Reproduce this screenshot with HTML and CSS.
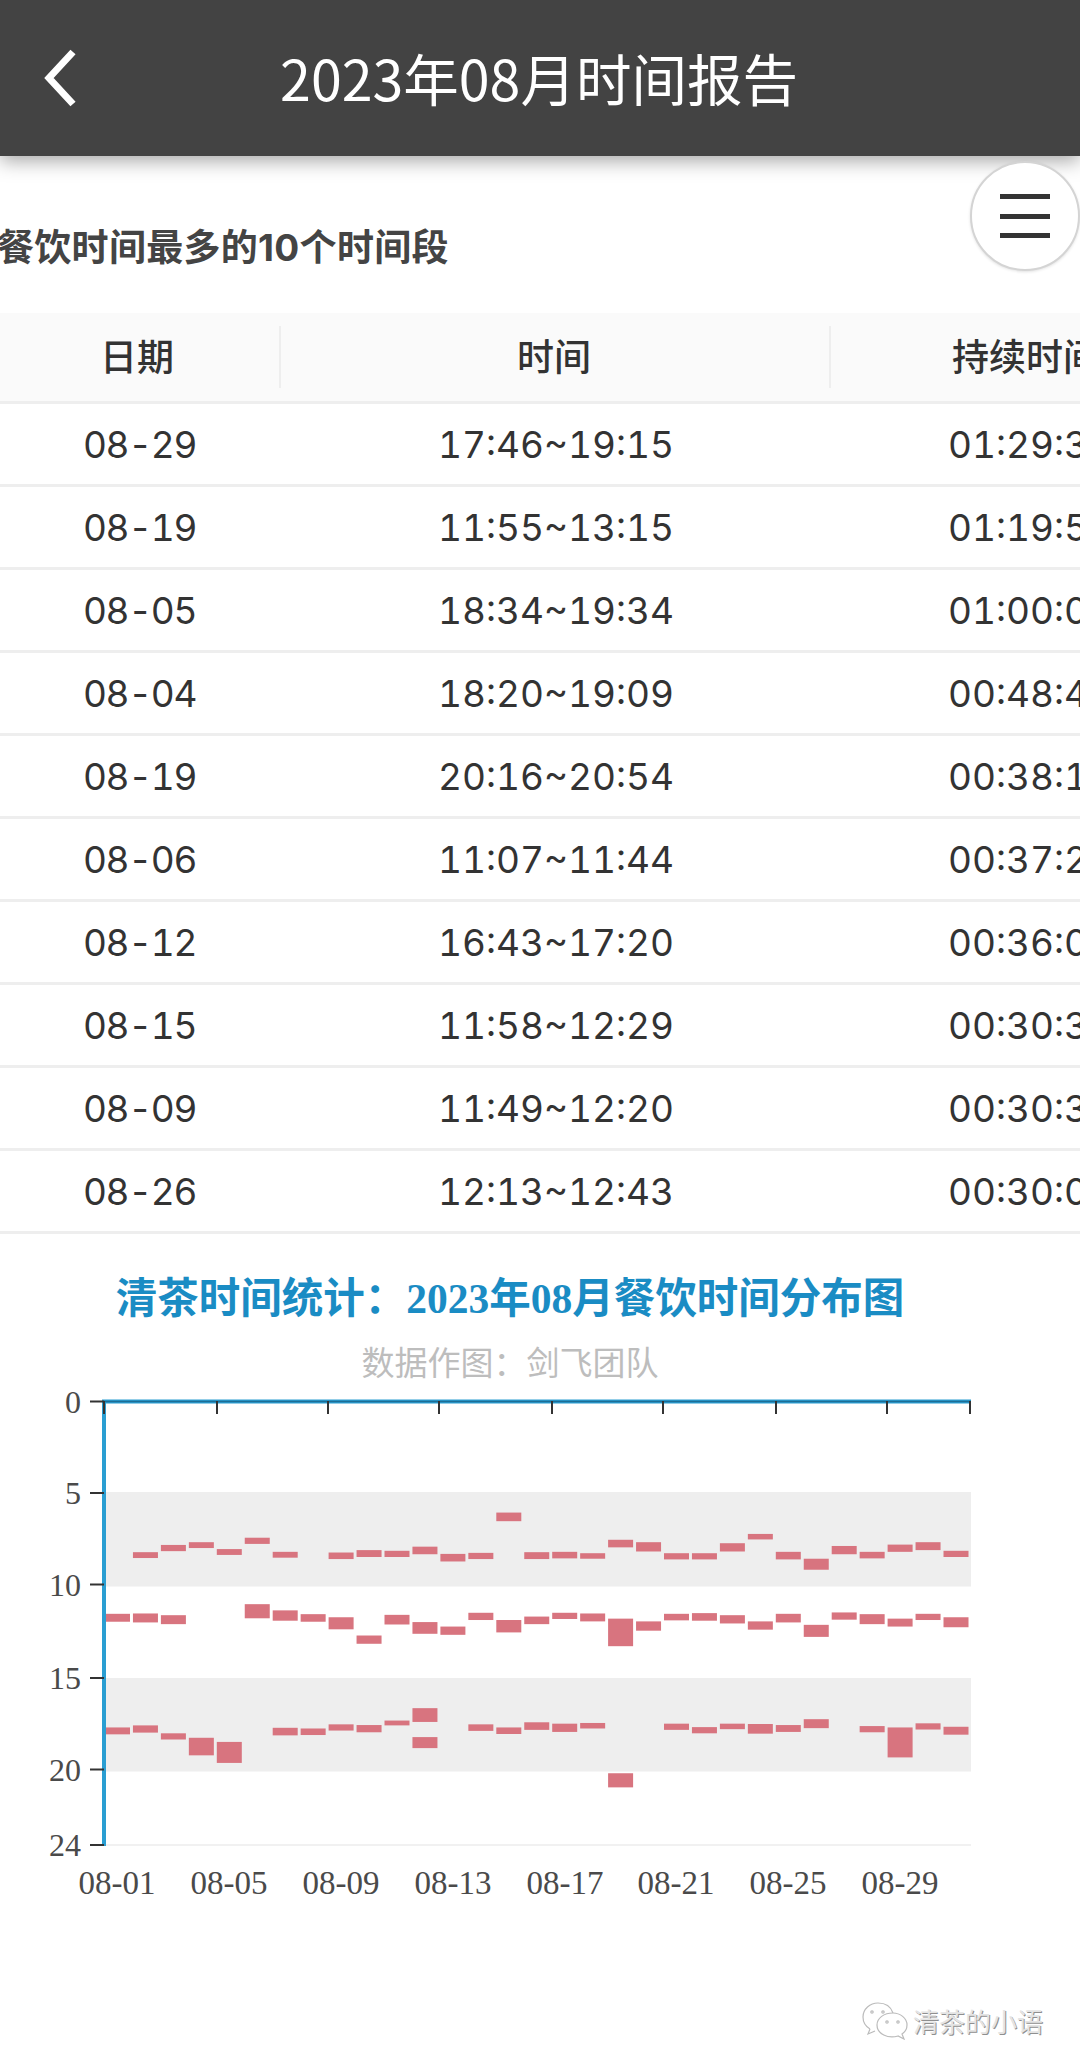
FILE: index.html
```html
<!DOCTYPE html>
<html lang="zh-CN">
<head>
    <meta charset="UTF-8">
    <title>2023年08月时间报告</title>
    <link rel="stylesheet" href="styles.css">
</head>
<body>
    <header class="topbar">
        <svg class="back" width="34" height="58" viewBox="0 0 34 58">
            <polyline points="30,3 6,29 30,55" fill="none" stroke="#fff" stroke-width="7"/>
        </svg>
        <h1>2023年08月时间报告</h1>
    </header>

    <button class="menu-btn">
        <span></span>
        <span></span>
        <span></span>
    </button>

    <h2 class="section-title">餐饮时间最多的10个时间段</h2>

    <div class="table-wrap">
        <table class="report">
            <thead>
                <tr><th>日期</th><th>时间</th><th>持续时间</th></tr>
            </thead>
            <tbody>
                <tr><td>08-29</td><td>17:46~19:15</td><td>01:29:30</td></tr>
                <tr><td>08-19</td><td>11:55~13:15</td><td>01:19:50</td></tr>
                <tr><td>08-05</td><td>18:34~19:34</td><td>01:00:00</td></tr>
                <tr><td>08-04</td><td>18:20~19:09</td><td>00:48:40</td></tr>
                <tr><td>08-19</td><td>20:16~20:54</td><td>00:38:10</td></tr>
                <tr><td>08-06</td><td>11:07~11:44</td><td>00:37:20</td></tr>
                <tr><td>08-12</td><td>16:43~17:20</td><td>00:36:00</td></tr>
                <tr><td>08-15</td><td>11:58~12:29</td><td>00:30:30</td></tr>
                <tr><td>08-09</td><td>11:49~12:20</td><td>00:30:30</td></tr>
                <tr><td>08-26</td><td>12:13~12:43</td><td>00:30:00</td></tr>
            </tbody>
        </table>
    </div>

    <section class="chart">
        <div class="chart-title">清茶时间统计：2023年08月餐饮时间分布图</div>
        <div class="chart-sub">数据作图：剑飞团队</div>
        <svg class="plot" width="1080" height="540" viewBox="0 0 1080 540">
            <rect class="band" x="105" y="112" width="866" height="94.5"/>
            <rect class="band" x="105" y="298" width="866" height="93.5"/>
            <line class="floor" x1="105" y1="465" x2="971" y2="465"/>
            <g id="bars"></g>

            <line class="axis" x1="104" y1="21" x2="104" y2="466"/>
            <line class="axis" x1="102" y1="21.5" x2="971" y2="21.5"/>
            <line class="axis-core" x1="104" y1="21.5" x2="971" y2="21.5"/>

            <g class="ticks">
                <line x1="104" y1="21" x2="104" y2="34"/>
                <line x1="217" y1="21" x2="217" y2="34"/>
                <line x1="328" y1="21" x2="328" y2="34"/>
                <line x1="439" y1="21" x2="439" y2="34"/>
                <line x1="552" y1="21" x2="552" y2="34"/>
                <line x1="663" y1="21" x2="663" y2="34"/>
                <line x1="776" y1="21" x2="776" y2="34"/>
                <line x1="887" y1="21" x2="887" y2="34"/>
                <line x1="970" y1="21" x2="970" y2="34"/>
                <line x1="90" y1="21.5" x2="104" y2="21.5"/>
                <line x1="90" y1="113" x2="104" y2="113"/>
                <line x1="90" y1="204.5" x2="104" y2="204.5"/>
                <line x1="90" y1="298" x2="104" y2="298"/>
                <line x1="90" y1="389.5" x2="104" y2="389.5"/>
                <line x1="90" y1="465" x2="104" y2="465"/>
            </g>

            <g class="y-labels">
                <text x="81" y="33">0</text>
                <text x="81" y="124">5</text>
                <text x="81" y="216">10</text>
                <text x="81" y="309">15</text>
                <text x="81" y="401">20</text>
                <text x="81" y="476">24</text>
            </g>
            <g class="x-labels">
                <text x="117" y="514">08-01</text>
                <text x="229" y="514">08-05</text>
                <text x="341" y="514">08-09</text>
                <text x="453" y="514">08-13</text>
                <text x="565" y="514">08-17</text>
                <text x="676" y="514">08-21</text>
                <text x="788" y="514">08-25</text>
                <text x="900" y="514">08-29</text>
            </g>
        </svg>
    </section>

    <footer class="mark">
        <svg width="46" height="38" viewBox="0 0 46 38" fill="none" stroke="#bbb" stroke-width="1.2">
            <path d="M8 27 C3 24 1 20 1 15 C1 7 8 1 16 1 C24 1 29 5 31 11"/>
            <path d="M8 27 L6 32 L13 29"/>
            <path d="M31 11 C38 11 45 16 45 23 C45 27 43 30 40 32 L42 37 L36 34 C26 37 15 32 15 23 C15 16 22 11 31 11Z"/>
            <circle cx="10" cy="10" r="1.2"/>
            <circle cx="21" cy="10" r="1.2"/>
            <circle cx="25" cy="20" r="1.2"/>
            <circle cx="36" cy="20" r="1.2"/>
        </svg>
        <span>清茶的小语</span>
    </footer>

    <script src="chart.js"></script>
</body>
</html>
```

FILE: styles.css
```css
* {
    margin: 0;
    padding: 0;
    box-sizing: border-box;
}

body {
    position: relative;
    width: 1080px;
    height: 2069px;
    overflow: hidden;
    background: #fff;
    color: #333;
    font-family: "Noto Sans CJK SC", sans-serif;
}

.topbar {
    position: relative;
    z-index: 2;
    height: 156px;
    display: flex;
    align-items: center;
    justify-content: center;
    background: #434343;
    box-shadow: 0 5px 18px rgba(0, 0, 0, 0.35);
}

.topbar h1 {
    font-size: 55.5px;
    font-weight: 400;
    color: #fff;
    line-height: 1;
    margin-left: -2px;
}

.back {
    position: absolute;
    left: 43px;
    top: 49px;
}

.menu-btn {
    position: absolute;
    z-index: 3;
    left: 970px;
    top: 161px;
    width: 110px;
    height: 110px;
    display: flex;
    flex-direction: column;
    align-items: center;
    justify-content: center;
    gap: 14.5px;
    background: #fff;
    border: 2px solid #d4d4d4;
    border-radius: 50%;
    box-shadow: 0 1px 3px rgba(0, 0, 0, 0.12);
}

.menu-btn span {
    display: block;
    width: 50px;
    height: 5px;
    background: #333;
}

.section-title {
    height: 157px;
    padding-top: 20px;
    margin-left: -3px;
    display: flex;
    align-items: center;
    font-family: Inter, "Noto Sans CJK SC", sans-serif;
    font-size: 37px;
    font-weight: 700;
    letter-spacing: 0.3px;
    color: #444;
}

.table-wrap {
    width: 1080px;
    overflow: hidden;
}

.report {
    width: 1223px;
    table-layout: fixed;
    border-collapse: collapse;
    font-family: Inter, "Noto Sans CJK SC", sans-serif;
}

.report th:nth-child(1), .report td:nth-child(1) { width: 279px; }
.report th:nth-child(2), .report td:nth-child(2) { width: 550px; }

.report th {
    position: relative;
    height: 89px;
    padding-bottom: 3px;
    background: #fafafa;
    border-bottom: 3px solid #eee;
    font-size: 37px;
    font-weight: 500;
    color: #333;
}

.report th:first-child { padding-right: 5px; }

.report th + th::before {
    content: "";
    position: absolute;
    left: 0;
    top: 13px;
    bottom: 13px;
    width: 2px;
    background: #eee;
}

.report td {
    height: 83px;
    padding-top: 2px;
    border-bottom: 3px solid #eee;
    text-align: center;
    font-size: 37px;
    font-variant-numeric: tabular-nums;
    color: #333;
}

.report td:nth-child(1) { letter-spacing: -1.4px; }
.report td:nth-child(2) { padding-left: 4px; }
.report td:nth-child(3) { padding-left: 8px; }

.chart {
    padding-top: 35px;
    text-align: center;
}

.chart-title {
    height: 60px;
    line-height: 60px;
    padding-right: 60px;
    font-family: "Liberation Serif", "Noto Sans CJK SC", serif;
    font-size: 41.5px;
    font-weight: 700;
    color: #1a8cc4;
}

.chart-sub {
    height: 26px;
    line-height: 26px;
    margin-top: 19px;
    padding-right: 60px;
    font-size: 33px;
    color: #bdbdbd;
}

.plot {
    display: block;
    margin-top: 6px;
}

.band { fill: #eee; }
.floor { stroke: #f1f1f1; stroke-width: 2; }
.axis { stroke: #2a9ed2; stroke-width: 4; }
.axis-core { stroke: #1c6e96; stroke-width: 1.5; }
.ticks line { stroke: #333; stroke-width: 2; }
.bar { fill: #d8747f; }

.plot text {
    font-family: "Liberation Serif", serif;
    font-size: 32px;
    fill: #4a4a4a;
}

.y-labels text { text-anchor: end; }
.x-labels text { text-anchor: middle; font-size: 33px; }

.mark {
    margin-top: 82px;
    padding-right: 37px;
    display: flex;
    align-items: center;
    justify-content: flex-end;
    gap: 5px;
    font-size: 26px;
    color: #e4e4e4;
    text-shadow: 1px 1px 0 #8f8f8f;
}
```

FILE: chart.js
```js
// bars as [day, top, bottom], measured off the plot at 2.904 units per px
const SCALE = 2.904;
const BARS = [
    [2,500,517],[3,479,497],[4,471,488],[5,491,508],[6,458,476],[7,499,516],
    [9,501,520],[10,494,514],[11,496,514],[12,484,506],[13,505,527],[14,502,520],
    [15,385,410],[16,500,520],[17,499,518],[18,503,519],[19,464,486],[20,471,498],
    [21,503,521],[22,503,521],[23,474,498],[24,447,463],[25,499,521],[26,519,551],
    [27,482,506],[28,499,518],[29,478,499],[30,471,494],[31,496,514],

    [1,679,702],[2,678,704],[3,683,709],[6,651,692],[7,669,699],[8,680,702],
    [9,689,724],[10,742,766],[11,682,710],[12,703,737],[13,716,740],[14,676,697],
    [15,697,733],[16,687,709],[17,676,694],[18,678,701],[19,693,773],[20,701,728],
    [21,679,698],[22,677,699],[23,683,707],[24,701,725],[25,679,704],[26,711,746],
    [27,675,696],[28,680,709],[29,693,716],[30,679,697],[31,689,718],

    [1,1009,1029],[2,1003,1024],[3,1026,1044],[4,1039,1090],[5,1051,1112],
    [7,1010,1032],[8,1012,1031],[9,1000,1018],[10,1002,1023],[11,989,1003],
    [12,953,993],[12,1037,1069],[14,1000,1019],[15,1009,1028],[16,994,1016],
    [17,998,1022],[18,996,1012],[19,1142,1183],[21,998,1016],[22,1008,1026],
    [23,998,1014],[24,999,1027],[25,1002,1022],[26,985,1011],[28,1005,1023],
    [29,1009,1096],[30,997,1015],[31,1007,1030]
];

const group = document.getElementById('bars');
BARS.forEach(([day, top, bottom]) => {
    const rect = document.createElementNS('http://www.w3.org/2000/svg', 'rect');
    rect.setAttribute('class', 'bar');
    rect.setAttribute('x', 105 + (day - 1) * 27.95);
    rect.setAttribute('y', top / SCALE);
    rect.setAttribute('width', 25);
    rect.setAttribute('height', (bottom - top) / SCALE);
    group.appendChild(rect);
});
```
